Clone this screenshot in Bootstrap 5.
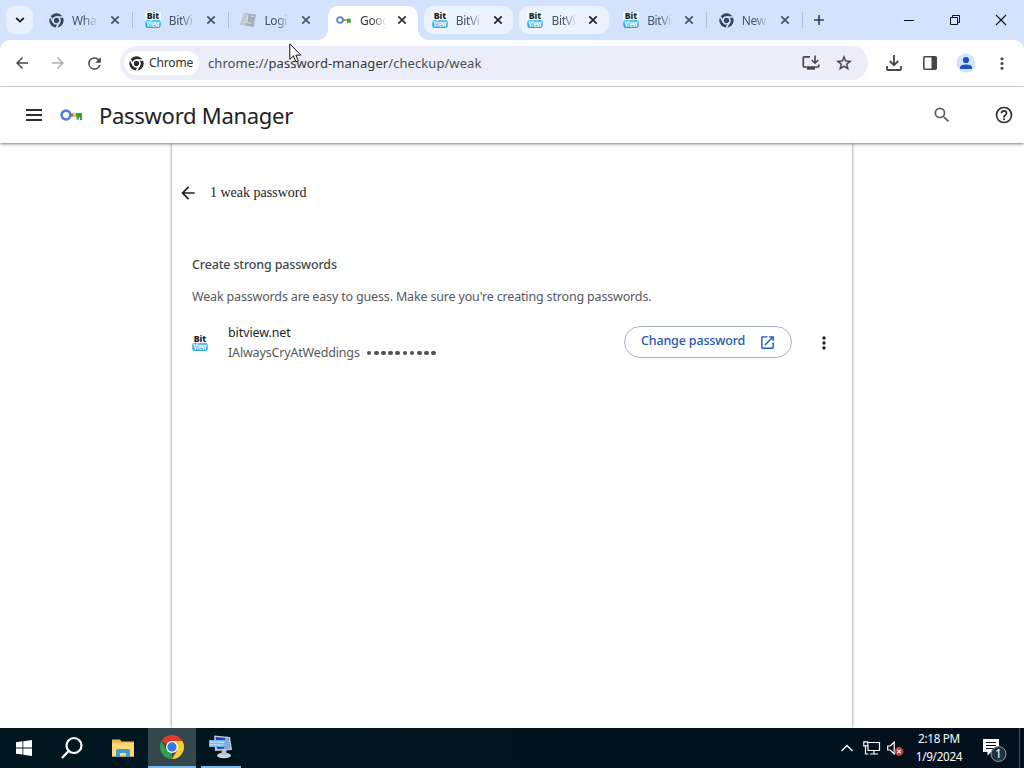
<!DOCTYPE html>
<html lang="en">
<head>
<meta charset="utf-8">
<meta name="viewport" content="width=device-width, initial-scale=1">
<title>Password Manager</title>
<link href="https://cdn.jsdelivr.net/npm/bootstrap@5.3.0/dist/css/bootstrap.min.css" rel="stylesheet">
<style>
body{width:1024px;height:768px;overflow:hidden;font-family:"Noto Sans","Open Sans",sans-serif;font-size:12.5px;line-height:20px;color:#1f1f1f;background:#fff}
svg{display:block;flex:none;overflow:visible}
.strip{height:40px;background:#d3e3fd;padding-left:6px}
.tabsearch{width:27px;height:28px;border-radius:9px;background:#e9f1fe;margin:6px 8px 0 0}
.btab{width:89.7px;height:28px;margin:6px 6px 0 0;padding-left:8px;border-radius:10px;position:relative;color:#46536a}
.btab.lit{background:#ecf3fe}
.btab.cur{background:#fff;height:34px;border-radius:10px 10px 0 0;padding-bottom:6px;color:#333}
.btab.cur::before,.btab.cur::after{content:"";position:absolute;bottom:0;width:10px;height:10px}
.btab.cur::before{left:-10px;background:radial-gradient(circle at 0 0,transparent 9.5px,#fff 10px)}
.btab.cur::after{right:-10px;background:radial-gradient(circle at 100% 0,transparent 9.5px,#fff 10px)}
.btab.sep::after{content:"";position:absolute;left:91px;top:6px;width:1.3px;height:16px;background:#a9bedf}
.tlabel{width:30px;margin-left:8px;padding-top:1px;white-space:nowrap;font-size:12px;letter-spacing:-.35px;-webkit-mask-image:linear-gradient(90deg,#000 40%,transparent 88%);mask-image:linear-gradient(90deg,#000 40%,transparent 88%)}
.tclose{margin-left:7px}
.bar-wrap{height:47px;background:#d3e3fd}
.toolbar{height:47px;background:#fff;border-radius:10px 10px 0 0;border-bottom:1px solid #dcdddf;color:#474747;padding-left:13px}
.omni{width:748px;height:34px;border-radius:17px;background:#ebeef8;margin-left:16px;padding:0 15px 0 4px}
.chip{width:75px;height:24px;border-radius:12px;background:#fff;padding-left:5px;font-size:12px;color:#303030;letter-spacing:-.14px}
.url{font-size:13px;color:#4a4d52;margin-left:9px;letter-spacing:.07px}
.url span{color:#33363b}
.apphead{height:56px;background:#fff;box-shadow:0 1px 3px rgba(0,0,0,.5);position:relative;z-index:2;padding-left:25px}
.apphead h1{font-size:22px;line-height:30px;font-weight:400;margin:0 0 0 15px;color:#202124;letter-spacing:-.28px}
.sheet{width:680px;height:585px;margin-left:172px;box-shadow:0 0 3px rgba(0,0,0,.55)}
.sheet h2{font:14px/20px "Liberation Serif",serif;color:#202124}
.sheet h3{font-size:12.5px;line-height:20px;font-weight:500;color:#444749;letter-spacing:-.16px}
.dim{color:#55585b;letter-spacing:-.165px}
.chg{width:168px;height:32px;border:1px solid #a9b4cb;border-radius:16px;color:#2458b5;font-size:12.5px;line-height:18px;font-weight:500;padding:0 15px 3px 16px;background:#fff;letter-spacing:-.16px;position:relative;top:-1px}
.dots i{width:4.6px;height:4.6px;border-radius:50%;background:#4f5255;margin-right:2.6px}
.task{height:40px;background:linear-gradient(90deg,#00171f,#02141f 35%,#02101e);color:#fff;position:relative;z-index:3}
.tb{width:48px;height:40px}
.tb.run{border-bottom:2px solid #76b9ed;width:40px;margin-left:5px}
.tb.on{background:#34474c;border-bottom:2px solid #76b9ed;margin-left:4px}
.clock{width:70px;font-size:11.7px;line-height:18px;letter-spacing:-.3px;text-align:center;white-space:nowrap;margin-bottom:2px}
.ptr{position:absolute;left:289px;top:43px;z-index:9}
</style>
</head>
<body>
<svg width="0" height="0" class="position-absolute">
<defs>
<symbol id="chr" viewBox="0 0 24 24"><circle cx="12" cy="12" r="11.5" fill="currentColor"/><circle cx="12" cy="12" r="5.6" fill="none" stroke="var(--bg)" stroke-width="2.6"/><path d="M12 6.4H22.500M7.200 14.800L2 5.800M16.800 14.800L11.600 23.800" stroke="var(--bg)" stroke-width="2.600" fill="none"/></symbol>
<symbol id="x" viewBox="0 0 10 10"><path d="M1.300 1.300l7.400 7.400M8.700 1.300L1.300 8.700" stroke="currentColor" stroke-width="1.700" fill="none"/></symbol>
<symbol id="bit" viewBox="0 0 16 16"><rect width="16" height="16" fill="#fff" opacity=".75"/><rect x=".3" y="8" width="15.400" height="8" rx="2" fill="#2ba5df"/><rect x=".8" y="8.200" width="14.400" height="3.200" rx="1.500" fill="#62c4ee"/><text x="8" y="6.800" font-family="Noto Sans" font-size="8.600" font-weight="800" text-anchor="middle" textLength="12.500" lengthAdjust="spacingAndGlyphs" fill="#161d22">Bit</text><text x="8" y="15" font-family="Noto Sans" font-size="8.400" font-weight="700" text-anchor="middle" textLength="13" lengthAdjust="spacingAndGlyphs" fill="#fff">View</text></symbol>
<symbol id="key" viewBox="0 0 24 14"><circle cx="6" cy="7" r="4.400" fill="none" stroke="#4f7fe0" stroke-width="2.600"/><path d="M11 5.500h3v3h-3z" fill="#ea4335"/><path d="M13 5.500h4v3h-4z" fill="#fbbc04"/><path d="M16 5h6v7h-2V9.500h-1v2H16.500V8.500H16z" fill="#34a048"/></symbol>
<symbol id="back" viewBox="0 0 24 24"><path fill="currentColor" d="M20 11H7.830l5.590-5.590L12 4l-8 8 8 8 1.410-1.410L7.830 13H20z"/></symbol>
<symbol id="more" viewBox="0 0 24 24"><path fill="currentColor" d="M12 8a2 2 0 1 0 0-4 2 2 0 0 0 0 4zm0 2a2 2 0 1 0 0 4 2 2 0 0 0 0-4zm0 6a2 2 0 1 0 0 4 2 2 0 0 0 0-4z"/></symbol>
</defs>
</svg>

<div class="strip d-flex align-items-start">
  <div class="tabsearch d-flex align-items-center justify-content-center"><svg width="10" height="6" viewBox="0 0 10 6"><path d="M1.200 1L5 4.600 8.800 1" fill="none" stroke="#1b1f26" stroke-width="1.800"/></svg></div>
  <div class="btab sep d-flex align-items-center"><svg width="15" height="15" style="--bg:#d3e3fd;color:#37465a"><use href="#chr"/></svg><span class="tlabel">Wha</span><svg class="tclose ms-2" width="10" height="10"><use href="#x"/></svg></div>
  <div class="btab sep d-flex align-items-center"><svg width="16" height="16"><use href="#bit"/></svg><span class="tlabel">BitVi</span><svg class="tclose" width="10" height="10"><use href="#x"/></svg></div>
  <div class="btab d-flex align-items-center"><svg width="16" height="16" viewBox="0 0 16 16"><path d="M4 1l12 1.500-2.500 12.500L0 12.500z" fill="#a5adb8"/><path d="M4 1l5 .6L5.500 13.500 0 12.500z" fill="#c3cad2"/><path d="M8 4l-1.500 6.500 5 .8M11 4l3 .5" fill="none" stroke="#dfe4ea" stroke-width="1"/></svg><span class="tlabel">Logi</span><svg class="tclose" width="10" height="10"><use href="#x"/></svg></div>
  <div class="btab cur d-flex align-items-center"><svg width="16" height="10"><use href="#key"/></svg><span class="tlabel">Goog</span><svg class="tclose" width="10" height="10"><use href="#x"/></svg></div>
  <div class="btab lit d-flex align-items-center"><svg width="16" height="16"><use href="#bit"/></svg><span class="tlabel">BitVi</span><svg class="tclose text-dark" width="10" height="10"><use href="#x"/></svg></div>
  <div class="btab lit d-flex align-items-center"><svg width="16" height="16"><use href="#bit"/></svg><span class="tlabel">BitVi</span><svg class="tclose text-dark" width="10" height="10"><use href="#x"/></svg></div>
  <div class="btab sep d-flex align-items-center"><svg width="16" height="16"><use href="#bit"/></svg><span class="tlabel">BitVi</span><svg class="tclose" width="10" height="10"><use href="#x"/></svg></div>
  <div class="btab sep d-flex align-items-center"><svg width="15" height="15" style="--bg:#d3e3fd;color:#37465a"><use href="#chr"/></svg><span class="tlabel">New</span><svg class="tclose ms-2" width="10" height="10"><use href="#x"/></svg></div>
  <div class="d-flex align-items-center h-100 flex-grow-1">
    <svg width="12" height="12" viewBox="0 0 12 12" class="me-auto" style="margin-left:6px"><path d="M6 1v10M1 6h10" stroke="#333f50" stroke-width="1.600"/></svg>
    <svg width="10" height="10" viewBox="0 0 10 10"><path d="M0 5.500h10" stroke="#111" stroke-width="1"/></svg>
    <svg width="10" height="10" viewBox="0 0 10 10" style="margin:0 36px"><path d="M.5 2.500h7v7h-7zM2.500 2.500v-2h7v7h-2" fill="none" stroke="#111" stroke-width="1"/></svg>
    <svg width="10" height="10" viewBox="0 0 10 10" style="margin-right:18px"><path d="M0 0l10 10M10 0L0 10" stroke="#111" stroke-width="1.100"/></svg>
  </div>
</div>

<div class="bar-wrap">
<div class="toolbar d-flex align-items-center">
  <svg width="18" height="18"><use href="#back"/></svg>
  <svg width="18" height="18" viewBox="0 0 24 24" style="margin:0 18px;color:#b3b0b5;transform:scaleX(-1)"><use href="#back"/></svg>
  <svg width="19" height="19" viewBox="0 0 24 24"><path fill="#474747" d="M17.650 6.350A7.960 7.960 0 0 0 12 4a8 8 0 1 0 7.730 10h-2.080A6 6 0 1 1 12 6c1.660 0 3.140.69 4.220 1.780L13 11h7V4z"/></svg>
  <div class="omni d-flex align-items-center">
    <div class="chip d-flex align-items-center"><svg width="15" height="15" style="--bg:#fff;color:#2c2c2c"><use href="#chr"/></svg><span style="margin-left:5px">Chrome</span></div>
    <div class="url me-auto">chrome://<span>password-manager</span>/checkup/weak</div>
    <svg width="18" height="16" viewBox="0 0 18 16" style="margin-right:15px"><path d="M8 1.800H2.300Q1.300 1.800 1.300 2.800V11q0 1 1 1h13.400q1 0 1-1V9.500" fill="none" stroke="#474747" stroke-width="1.700"/><path d="M5 12h8v2.700H5z" fill="#474747"/><path d="M13 .5v7M9.800 5L13 8.200 16.200 5" fill="none" stroke="#474747" stroke-width="1.600"/></svg>
    <svg width="18" height="18" viewBox="0 0 24 24"><path fill="#474747" d="M22 9.240l-7.190-.62L12 2 9.190 8.630 2 9.240l5.460 4.730L5.820 21 12 17.270 18.180 21l-1.630-7.030zM12 15.400l-3.760 2.270 1-4.280-3.320-2.880 4.380-.38L12 6.100l1.710 4.040 4.380.38-3.320 2.880 1 4.280z" stroke="#474747" stroke-width=".5"/></svg>
  </div>
  <svg width="16" height="16" viewBox="0 0 16 16" style="margin-left:18px"><path d="M8 0v10M3.800 6L8 10.200 12.200 6M1 11v3q0 1 1 1h12q1 0 1-1v-3" fill="none" stroke="#474747" stroke-width="1.800"/></svg>
  <svg width="14" height="14" viewBox="0 0 14 14" style="margin-left:21px"><rect x=".8" y=".8" width="12.400" height="12.400" rx="1" fill="none" stroke="#474747" stroke-width="1.600"/><path d="M8.500 1h5v12h-5z" fill="#474747"/></svg>
  <svg width="20" height="20" viewBox="0 0 20 20" style="margin-left:19px"><circle cx="10" cy="10" r="9.500" fill="#d3e3fd"/><circle cx="10" cy="7" r="3.100" fill="#1c54c0"/><path d="M4 16v-1.500q0-3 6-3t6 3V16z" fill="#1c54c0"/></svg>
  <svg width="20" height="19" style="margin-left:16px;color:#474747"><use href="#more"/></svg>
</div>
</div>

<header class="apphead d-flex align-items-center">
  <svg width="18" height="12" viewBox="0 0 18 12"><path d="M1 1h16M1 6h16M1 11h16" stroke="#2b2c2e" stroke-width="2"/></svg>
  <svg width="24" height="14" style="margin-left:17px"><use href="#key"/></svg>
  <h1>Password Manager</h1>
  <svg class="ms-auto" width="20" height="20" viewBox="0 0 24 24" style="margin-right:42px"><path fill="#5a5b5e" d="M15.500 14h-.79l-.28-.27A6.470 6.470 0 0 0 16 9.500 6.500 6.500 0 1 0 9.500 16c1.610 0 3.090-.59 4.230-1.570l.27.28v.79l5 4.990L20.490 19zm-6 0a4.500 4.500 0 1 1 0-9 4.500 4.500 0 0 1 0 9z"/></svg>
  <svg width="20" height="20" viewBox="0 0 24 24" style="margin-right:10px"><path fill="#2e2f31" d="M11 18h2v-2h-2zM12 2a10 10 0 1 0 0 20 10 10 0 0 0 0-20zm0 18a8 8 0 1 1 0-16 8 8 0 0 1 0 16zm0-14a4 4 0 0 0-4 4h2a2 2 0 1 1 4 0c0 2-3 1.750-3 5h2c0-2.250 3-2.500 3-5a4 4 0 0 0-4-4z"/></svg>
</header>

<main class="sheet">
  <div class="d-flex align-items-center" style="padding:40px 0 0 6px"><svg width="20" height="20"><use href="#back"/></svg><h2 class="mb-0" style="margin-left:12px">1 weak password</h2></div>
  <section style="padding:52px 0 0 20px">
    <h3 class="mb-0">Create strong passwords</h3>
    <p class="dim mb-0" style="margin-top:12px">Weak passwords are easy to guess. Make sure you're creating strong passwords.</p>
    <div class="d-flex align-items-center" style="margin-top:16px">
      <svg width="16" height="16"><use href="#bit"/></svg>
      <div style="margin-left:20px">
        <div style="letter-spacing:-.1px">bitview.net</div>
        <div class="d-flex align-items-center dim"><span>IAlwaysCryAtWeddings</span><span class="dots d-flex" style="margin-left:7px"><i></i><i></i><i></i><i></i><i></i><i></i><i></i><i></i><i></i><i></i></span></div>
      </div>
      <button class="chg ms-auto d-flex align-items-center justify-content-between">Change password<svg width="17" height="17" viewBox="0 0 24 24" style="margin-top:3px"><path fill="#2458b5" d="M19 19H5V5h7V3H5a2 2 0 0 0-2 2v14c0 1.100.89 2 2 2h14a2 2 0 0 0 2-2v-7h-2zM14 3v2h3.590l-9.830 9.830 1.410 1.410L19 6.410V10h2V3z"/></svg></button>
      <svg width="20" height="20" style="margin:0 18px 0 22px;color:#1f1f1f"><use href="#more"/></svg>
    </div>
  </section>
</main>

<footer class="task d-flex align-items-center">
  <div class="tb d-flex align-items-center justify-content-center"><svg width="16" height="16" viewBox="0 0 16 16" fill="#fff"><path d="M0 2.200l6.500-.9v6.200H0zM7.300 1.200L16 0v7.500H7.300zM0 8.400h6.500v6.200L0 13.700zM7.300 8.400H16V16l-8.700-1.200z"/></svg></div>
  <div class="tb d-flex align-items-center justify-content-center"><svg width="22" height="22" viewBox="0 0 22 22"><circle cx="13" cy="8.500" r="7.500" fill="none" stroke="#fff" stroke-width="2.200"/><path d="M7.600 14L1 21" stroke="#fff" stroke-width="2.500"/></svg></div>
  <div class="tb d-flex align-items-center justify-content-center" style="padding-left:5px"><svg width="22" height="18" viewBox="0 0 22 18"><path d="M0 .5h8l1.500 2H22v15H0z" fill="#eebc4d"/><path d="M0 4h22v13.500H0z" fill="#fbd775"/><path d="M4 18v-6.500q0-1.500 1.500-1.500h11q1.500 0 1.500 1.500V18h-4v-4H8v4z" fill="#3f9bd0"/></svg></div>
  <div class="tb on d-flex align-items-center justify-content-center"><svg width="24" height="24" viewBox="0 0 24 24"><path d="M12 12L1.600 6A12 12 0 0 1 22.400 6z" fill="#e33b2e"/><path d="M12 12V24A12 12 0 0 1 1.600 6L6.800 15z" fill="#2ca04c"/><path d="M12 6h10.400A12 12 0 0 1 12 24l5.200-9z" fill="#fccb2f"/><circle cx="12" cy="12" r="6" fill="#fff"/><circle cx="12" cy="12" r="4.700" fill="#3678e0"/></svg></div>
  <div class="tb run d-flex align-items-center justify-content-center"><svg width="24" height="24" viewBox="0 0 24 24"><path d="M5 .5l16 1.500 2 13-17 1z" fill="#c5cede"/><path d="M6.500 2l13 1.200 1.500 10L8 14z" fill="#1c3dab"/><path d="M16 3l3.500.2 1.500 10-6 .5z" fill="#8ea5dc"/><ellipse cx="15" cy="20.500" rx="7" ry="2.800" fill="#cfd2d6"/><path d="M12.500 15h5v5h-5z" fill="#b9bec7"/><path d="M0 5h17l-1.500 7H0z" fill="#71b9ea"/><path d="M1 7.200h14M1 9.800h13" stroke="#e5f5ff" stroke-width="1" stroke-dasharray="3 .8"/></svg></div>
  <svg class="ms-auto" width="12" height="8" viewBox="0 0 12 8"><path d="M.5 7L6 1.500 11.500 7" fill="none" stroke="#fff" stroke-width="1.300"/></svg>
  <svg width="17" height="14" viewBox="0 0 17 14" style="margin-left:10px"><path d="M5.500 1.500h11v8H5v-5M11 9.500v3.500M7 13h8M2.500 5v8h3M.8.8h4v4h-4z" fill="none" stroke="#fff" stroke-width="1.200"/></svg>
  <svg width="17" height="15" viewBox="0 0 17 15" style="margin-left:7px"><path d="M.7 5h2.500l4-3.800v11.600l-4-3.800H.7z" fill="none" stroke="#fff" stroke-width="1.200"/><circle cx="12" cy="10.500" r="4.400" fill="#d13b3c"/><path d="M10.300 8.800l3.400 3.400M13.700 8.800l-3.400 3.400" stroke="#fff" stroke-width="1.200"/></svg>
  <div class="clock">2:18 PM<br>1/9/2024</div>
  <svg width="24" height="24" viewBox="0 0 24 24" style="margin:3px 12px 0 9px"><path d="M0 1h16v13H8l-3.500 3.500V14H0z" fill="#fff"/><path d="M3 4.500h10M3 7.500h10M3 10.500h8" stroke="#02101e" stroke-width="1.200"/><circle cx="15.500" cy="16" r="7.500" fill="#22303a" stroke="#929ba1" stroke-width="1"/><text x="15.500" y="20" font-family="Noto Sans" font-size="12" fill="#fff" text-anchor="middle">1</text></svg>
  <div style="width:5px;height:40px;border-left:1px solid #45525d"></div>
</footer>

<svg class="ptr" width="13" height="20" viewBox="0 0 13 20"><path d="M.8 .8v15.500l3.600-3.400 2.500 6 2.400-1-2.500-5.800h5z" fill="#fff" stroke="#111" stroke-width="1"/></svg>
<script src="https://cdn.jsdelivr.net/npm/bootstrap@5.3.0/dist/js/bootstrap.bundle.min.js"></script>
</body>
</html>
